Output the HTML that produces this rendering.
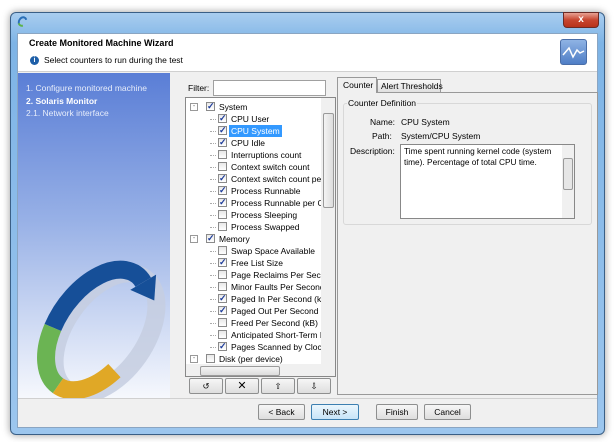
<!DOCTYPE html>
<html><head><meta charset="utf-8"><style>
*{margin:0;padding:0;box-sizing:border-box}
body{width:614px;height:442px;background:#fff;font-family:"Liberation Sans",sans-serif;font-size:8.5px;color:#000;position:relative;overflow:hidden}
.a{position:absolute;white-space:nowrap}
.win{left:10px;top:12px;width:595px;height:423px;border:1px solid #3a5f86;border-radius:6px;background:linear-gradient(#a9cdef,#7eb4e6 30px,#9cc6ee);box-shadow:0 0 8px rgba(0,0,0,.4)}
.row{position:absolute;left:0;height:12px;line-height:12px;white-space:nowrap}
.cb{position:absolute;width:9px;height:9px;border:1px solid #8a8a8a;background:linear-gradient(#e8e8e8,#fff);top:1px}
.cb.c::after{content:"✓";position:absolute;left:0px;top:-3px;font-size:9px;color:#1b3a9a;font-weight:bold}
.btn{position:absolute;height:16px;border:1px solid #8e8f8f;border-radius:2px;background:linear-gradient(#f6f6f6,#dedede);text-align:center;line-height:14px;font-size:8.5px}
</style></head><body>
<div class="a win"></div>
<div class="a" style="left:18px;top:16px;width:9px;height:11px;border:2px solid #2a6fb7;border-right-color:transparent;border-bottom-color:#5cb247;border-radius:50%;transform:rotate(30deg)"></div>
<div class="a" style="left:563px;top:12px;width:36px;height:16px;border:1px solid #6b2a25;border-radius:0 0 4px 4px;background:linear-gradient(#e8a293,#c7452f 50%,#b8321b);color:#fff;font-weight:bold;text-align:center;font-size:10px;line-height:14px">x</div>
<div class="a" style="left:17px;top:33px;width:581px;height:395px;background:#f0f0f0;border:1px solid #8aa5c2"></div>
<div class="a" style="left:18px;top:34px;width:579px;height:38px;background:#fff;border-bottom:1px solid #d0d0d0"></div>
<div class="a" style="left:29px;top:38px;font-weight:bold;font-size:9px">Create Monitored Machine Wizard</div>
<div class="a" style="left:30px;top:56px;width:9px;height:9px;border-radius:50%;background:#1e5fa8;color:#fff;font-size:7px;text-align:center;line-height:9px;font-weight:bold">i</div>
<div class="a" style="left:44px;top:55px">Select counters to run during the test</div>
<div class="a" style="left:560px;top:39px;width:27px;height:26px;border-radius:3px;background:linear-gradient(#8fb3e4,#4f7ec6);border:1px solid #4a6ea8">
<svg width="25" height="24" viewBox="0 0 25 24"><path d="M2 15 L8 8 L12 17 L16 10 L19 13 L23 11" stroke="#fff" stroke-width="1.5" fill="none"/></svg></div>
<div class="a" style="left:18px;top:73px;width:152px;height:325px;background:linear-gradient(#5a7ed6,#97b0e6 45%,#f6f8fd);overflow:hidden">
<svg class="a" style="left:2px;top:165px" width="150" height="175" viewBox="-10 -10 150 175">
<g transform="rotate(35 67 82)">
<ellipse cx="76" cy="80" rx="40" ry="68" fill="none" stroke="#c6cee0" stroke-width="18" opacity=".85"/>
<path d="M29.4 105.3 A40 68 0 0 1 77.4 16.3" fill="none" stroke="#164f98" stroke-width="18"/>
<path d="M71.2 30 L83.6 2.7 L97 25 Z" fill="#164f98"/>
<path d="M67 150 A40 68 0 0 1 29.4 105.3" fill="none" stroke="#6bb453" stroke-width="18"/>
<path d="M104.6 105.3 A40 68 0 0 1 67 150" fill="none" stroke="#e0a826" stroke-width="18"/>
</g>
</svg>
</div>
<div class="a" style="left:26px;top:83px;color:#e6ecfa">1. Configure monitored machine</div>
<div class="a" style="left:26px;top:96px;color:#fff;font-weight:bold">2. Solaris Monitor</div>
<div class="a" style="left:26px;top:108px;color:#e6ecfa">2.1. Network interface</div>
<div class="a" style="left:188px;top:83px">Filter:</div>
<div class="a" style="left:213px;top:80px;width:113px;height:16px;background:#fff;border:1px solid #a0a0a0"></div>
<div class="a" style="left:185px;top:97px;width:151px;height:280px;background:#fff;border:1px solid #888;overflow:hidden">
 <div id="t" class="a" style="left:0;top:3px;width:135px;height:265px;overflow:hidden"></div>
 <div class="a" style="left:135px;top:0;width:14px;height:266px;background:#f0f0f0"></div>
 <div class="a" style="left:137px;top:15px;width:11px;height:95px;border:1px solid #9a9a9a;border-radius:2px;background:linear-gradient(90deg,#f4f4f4,#dcdcdc)"></div>
 <div class="a" style="left:0;top:266px;width:149px;height:13px;background:#f0f0f0"></div>
 <div class="a" style="left:14px;top:268px;width:80px;height:10px;border:1px solid #9a9a9a;border-radius:2px;background:linear-gradient(#f4f4f4,#dcdcdc)"></div>
</div>
<script>
var rows=[[0,1,"System"],[1,1,"CPU User"],[1,1,"CPU System",1],[1,1,"CPU Idle"],[1,0,"Interruptions count"],[1,0,"Context switch count"],[1,1,"Context switch count per"],[1,1,"Process Runnable"],[1,1,"Process Runnable per CPU"],[1,0,"Process Sleeping"],[1,0,"Process Swapped"],[0,1,"Memory"],[1,0,"Swap Space Available"],[1,1,"Free List Size"],[1,0,"Page Reclaims Per Second"],[1,0,"Minor Faults Per Second"],[1,1,"Paged In Per Second (kB)"],[1,1,"Paged Out Per Second (kB)"],[1,0,"Freed Per Second (kB)"],[1,0,"Anticipated Short-Term Mem"],[1,1,"Pages Scanned by Clock Alg"],[0,0,"Disk (per device)"]];
var h="";rows.forEach(function(r,i){var x=r[0]?32:20;h+='<div class="row" style="top:'+(i*12)+'px;left:0;width:135px">'+(r[0]?'<span class="a" style="left:24px;top:6px;width:6px;border-top:1px dotted #aaa"></span>':'<span class="a" style="left:4px;top:2px;width:8px;height:8px;border:1px solid #999;font-size:7px;line-height:5px;text-align:center;color:#666">-</span>')+'<span class="cb'+(r[1]?' c':'')+'" style="left:'+x+'px"></span><span class="a" style="left:'+(x+13)+'px;top:0;'+(r[3]?'background:#3399ff;color:#fff;padding:0 2px;left:'+(x+11)+'px':'')+'">'+r[2]+'</span></div>'});
document.getElementById('t').innerHTML=h;
</script>
<div class="btn" style="left:189px;top:378px;width:34px">↺</div>
<div class="btn" style="left:225px;top:378px;width:34px;font-size:11px">✕</div>
<div class="btn" style="left:261px;top:378px;width:34px">⇧</div>
<div class="btn" style="left:297px;top:378px;width:34px">⇩</div>
<div class="a" style="left:337px;top:92px;width:261px;height:303px;border:1px solid #999;background:#f0f0f0"></div>
<div class="a" style="left:337px;top:77px;width:40px;height:16px;border:1px solid #999;border-bottom:none;background:#f0f0f0;padding:2px 0 0 5px">Counter</div>
<div class="a" style="left:377px;top:79px;width:64px;height:13px;border:1px solid #999;border-bottom:none;background:linear-gradient(#f8f8f8,#e0e0e0);padding:1px 0 0 3px">Alert Thresholds</div>
<div class="a" style="left:343px;top:103px;width:249px;height:122px;border:1px solid #d8d8d8;border-radius:3px"></div>
<div class="a" style="left:347px;top:98px;background:#f0f0f0;padding:0 1px">Counter Definition</div>
<div class="a" style="left:370px;top:117px">Name:</div><div class="a" style="left:401px;top:117px">CPU System</div>
<div class="a" style="left:372px;top:131px">Path:</div><div class="a" style="left:401px;top:131px">System/CPU System</div>
<div class="a" style="left:350px;top:146px">Description:</div>
<div class="a" style="left:400px;top:144px;width:175px;height:75px;background:#fff;border:1px solid #888"></div>
<div class="a" style="left:404px;top:146px;width:158px;line-height:11px;white-space:normal;font-size:8.3px">Time spent running kernel code (system time). Percentage of total CPU time.</div>
<div class="a" style="left:562px;top:145px;width:12px;height:73px;background:#f0f0f0"></div>
<div class="a" style="left:563px;top:158px;width:10px;height:32px;border:1px solid #9a9a9a;border-radius:2px;background:#e6e6e6"></div>
<div class="a" style="left:18px;top:398px;width:579px;border-top:1px solid #d0d0d0"></div>
<div class="btn" style="left:258px;top:404px;width:47px">&lt; Back</div>
<div class="btn" style="left:311px;top:404px;width:48px;border-color:#3c7fb1;background:linear-gradient(#eaf6fd,#c7e4f8)">Next &gt;</div>
<div class="btn" style="left:376px;top:404px;width:42px">Finish</div>
<div class="btn" style="left:424px;top:404px;width:47px">Cancel</div>
</body></html>
